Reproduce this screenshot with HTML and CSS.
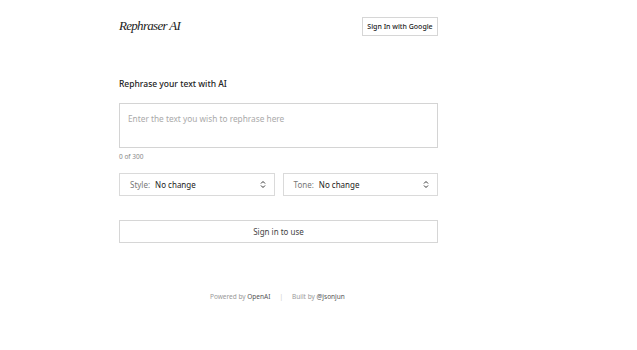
FILE: index.html
```html
<!DOCTYPE html>
<html>
<head>
<meta charset="utf-8">
<link rel="stylesheet" href="styles.css">
</head>
<body>
<div class="page">
  <header class="header">
    <div class="logo">Rephraser AI</div>
    <button class="btn-google">Sign In with Google</button>
  </header>
  <main class="main">
    <h1 class="title">Rephrase your text with AI</h1>
    <div class="textarea">Enter the text you wish to rephrase here</div>
    <div class="counter">0 of 300</div>
    <div class="selects">
      <div class="select"><span class="lbl">Style:</span><span class="val">No change</span>
        <svg class="chev" width="6" height="9" viewBox="0 0 6 9"><path d="M1 3.5L3 1.5L5 3.5M1 5.5L3 7.5L5 5.5" fill="none" stroke="#333" stroke-width="1"/></svg></div>
      <div class="select"><span class="lbl">Tone:</span><span class="val">No change</span>
        <svg class="chev" width="6" height="9" viewBox="0 0 6 9"><path d="M1 3.5L3 1.5L5 3.5M1 5.5L3 7.5L5 5.5" fill="none" stroke="#333" stroke-width="1"/></svg></div>
    </div>
    <button class="btn-use">Sign in to use</button>
  </main>
  <footer class="footer">
    <span>Powered by <span class="dark">OpenAI</span></span>
    <span class="sep">|</span>
    <span>Built by <span class="dark">@jsonjun</span></span>
  </footer>
</div>
</body>
</html>
```

FILE: styles.css
```css
* { box-sizing: border-box; }
html, body { margin: 0; padding: 0; background: #fff; }
body { font-family: "Noto Sans", "Open Sans", sans-serif; color: #222; }
.page { width: 319px; margin-left: 119px; }
.header { display: flex; justify-content: space-between; align-items: center; height: 52px; }
.logo { font-family: "Liberation Serif", serif; font-style: italic; font-size: 13px; letter-spacing: -0.7px; color: #222; }
.btn-google { font-family: inherit; font-size: 7px; font-weight: 500; color: #222; background: #fff; border: 1px solid #d6d6d6; height: 19px; width: 76px; padding: 0; }
.main { padding-top: 26px; }
.title { font-size: 8.5px; font-weight: 500; margin: 0 0 14px 0; color: #222; }
.textarea { border: 1px solid #d4d4d4; height: 45px; padding: 9px 8px; font-size: 8.3px; color: #aaa; }
.counter { font-size: 6.5px; color: #888; margin-top: 4px; }
.selects { display: flex; gap: 8px; margin-top: 12px; }
.select { flex: 1; display: flex; align-items: center; height: 23px; border: 1px solid #dadada; padding: 0 8px 0 10px; font-size: 8px; }
.lbl { color: #777; margin-right: 5px; }
.val { color: #222; flex: 1; }
.chev { display: block; }
.btn-use { display: block; width: 100%; height: 23px; margin-top: 24px; background: #fff; border: 1px solid #d6d6d6; font-family: inherit; font-size: 8px; color: #444; padding: 0; }
.footer { display: flex; align-items: center; gap: 9px; margin-top: 49px; margin-left: 91px; font-size: 6.5px; color: #999; }
.dark { color: #555; }
.sep { color: #ccc; }
```
